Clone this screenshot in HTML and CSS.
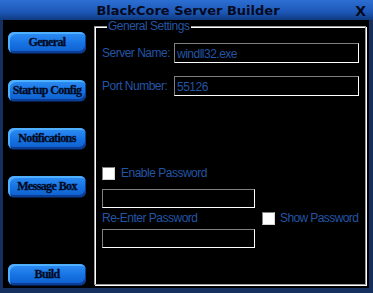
FILE: index.html
```html
<!DOCTYPE html>
<html lang="en">
<head>
  <meta charset="UTF-8">
  <title>BlackCore Server Builder</title>
  <link rel="stylesheet" href="styles.css">
</head>
<body>
  <div class="window">
    <div class="titlebar">
      <span class="title">BlackCore Server Builder</span>
      <span class="close">X</span>
    </div>
    <div class="content">
      <div class="sidebar">
        <button class="nav">General</button>
        <button class="nav">Startup Config</button>
        <button class="nav">Notifications</button>
        <button class="nav">Message Box</button>
        <button class="nav build">Build</button>
      </div>
      <fieldset class="group">
        <legend>General Settings</legend>
        <div class="row first">
          <span class="label">Server Name:</span>
          <div class="field wide">windll32.exe</div>
        </div>
        <div class="row">
          <span class="label">Port Number:</span>
          <div class="field wide">55126</div>
        </div>
        <div class="check-row">
          <span class="check"></span>
          <span class="check-label">Enable Password</span>
        </div>
        <div class="field pw first-pw"></div>
        <div class="pw-row">
          <div class="pw-col">
            <div class="pw-label">Re-Enter Password</div>
            <div class="field pw"></div>
          </div>
          <div class="check-row show">
            <span class="check"></span>
            <span class="check-label">Show Password</span>
          </div>
        </div>
      </fieldset>
    </div>
  </div>
</body>
</html>
```

FILE: styles.css
```css
* {
  box-sizing: border-box;
}
body {
  margin: 0;
  background: #000;
}
.window {
  width: 373px;
  height: 293px;
  background: #15305f;
  display: flex;
  flex-direction: column;
}
.titlebar {
  height: 20px;
  background: linear-gradient(#2c6fd2, #1d58b8 60%, #103a80);
  display: flex;
  align-items: center;
  position: relative;
}
.title {
  flex: 1;
  text-align: center;
  font-family: "DejaVu Sans", sans-serif;
  font-weight: bold;
  font-size: 13px;
  color: #050a20;
  padding-left: 3px;
}
.close {
  position: absolute;
  right: 7px;
  top: 3px;
  font-family: "DejaVu Sans", sans-serif;
  font-size: 14px;
  font-weight: bold;
  color: #050a20;
}
.content {
  flex: 1;
  margin: 0 4px 5px 3px;
  background: #000;
  display: flex;
}
.sidebar {
  flex: none;
  width: 91px;
  padding: 12px 0 3px 5px;
  display: flex;
  flex-direction: column;
  gap: 27px;
}
.nav {
  width: 78px;
  height: 21px;
  padding: 0;
  border: none;
  border-radius: 6px;
  background: linear-gradient(#2f8ef6, #1672e2 55%, #0f5fcc);
  box-shadow: inset 2px 2px 0 #4fb0ff, inset -1px -2px 0 #0a3d96, 0 1px 0 #06204a;
  font-family: "Liberation Serif", serif;
  font-weight: bold;
  font-size: 12px;
  letter-spacing: -0.6px;
  white-space: nowrap;
  color: #000a22;
  -webkit-text-stroke: 0.3px #000a22;
}
.build {
  margin-top: auto;
}
.group {
  flex: 1;
  min-width: 0;
  margin: 0 3px 3px 0;
  padding: 0 4px 0 7px;
  border: 1px solid #9a9a9a;
  box-shadow: inset 1px 1px 0 #fff, 1px 1px 0 #fff;
  font-family: "Liberation Sans", sans-serif;
  font-size: 12px;
  letter-spacing: -0.5px;
  color: #2355a5;
}
.group legend {
  margin-left: 5px;
  padding: 0 2px 0 1px;
  line-height: 12px;
  background: #000;
  position: relative;
}
.row {
  display: flex;
  align-items: center;
  margin-top: 13px;
}
.row.first {
  margin-top: 11px;
}
.label {
  width: 72px;
}
.field {
  height: 20px;
  border: 1px solid;
  border-color: #808080 #fff #fff #808080;
  background: #000;
  padding: 3px 2px 0;
  line-height: 14px;
  color: #2355a5;
}
.wide {
  width: 185px;
}
.check-row {
  display: flex;
  align-items: center;
  gap: 6px;
  margin-top: 70px;
  white-space: nowrap;
}
.check {
  width: 13px;
  height: 13px;
  background: #fff;
  border: 1px solid;
  border-color: #808080 #d4d4d4 #d4d4d4 #808080;
}
.pw {
  width: 153px;
  height: 19px;
}
.first-pw {
  margin-top: 9px;
}
.pw-row {
  display: flex;
}
.pw-label {
  height: 21px;
  padding-top: 3px;
  line-height: 14px;
}
.show {
  margin: 3px 0 0 7px;
  align-self: flex-start;
  gap: 5px;
  letter-spacing: -0.6px;
}
```
